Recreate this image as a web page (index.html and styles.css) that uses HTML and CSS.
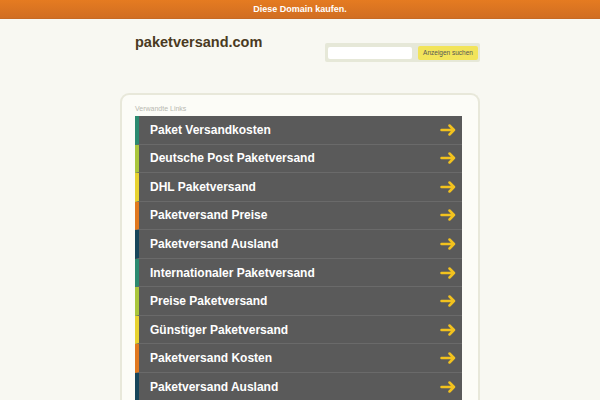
FILE: index.html
```html
<!DOCTYPE html>
<html>
<head>
<meta charset="utf-8">
<link rel="stylesheet" href="styles.css">
</head>
<body>
<div class="topbar">Diese Domain kaufen.</div>
<div class="wrap">
  <div class="header">
    <div class="logo">paketversand.com</div>
    <div class="search">
      <div class="input"></div>
      <div class="btn">Anzeigen suchen</div>
    </div>
  </div>
  <div class="panel">
    <div class="label">Verwandte Links</div>
    <div class="list">
      <div class="row c1"><span>Paket Versandkosten</span><svg class="arr" viewBox="0 0 16 12"><path d="M1.5 6H14M9.5 1.5L14 6L9.5 10.5"/></svg></div>
      <div class="row c2"><span>Deutsche Post Paketversand</span><svg class="arr" viewBox="0 0 16 12"><path d="M1.5 6H14M9.5 1.5L14 6L9.5 10.5"/></svg></div>
      <div class="row c3"><span>DHL Paketversand</span><svg class="arr" viewBox="0 0 16 12"><path d="M1.5 6H14M9.5 1.5L14 6L9.5 10.5"/></svg></div>
      <div class="row c4"><span>Paketversand Preise</span><svg class="arr" viewBox="0 0 16 12"><path d="M1.5 6H14M9.5 1.5L14 6L9.5 10.5"/></svg></div>
      <div class="row c5"><span>Paketversand Ausland</span><svg class="arr" viewBox="0 0 16 12"><path d="M1.5 6H14M9.5 1.5L14 6L9.5 10.5"/></svg></div>
      <div class="row c1"><span>Internationaler Paketversand</span><svg class="arr" viewBox="0 0 16 12"><path d="M1.5 6H14M9.5 1.5L14 6L9.5 10.5"/></svg></div>
      <div class="row c2"><span>Preise Paketversand</span><svg class="arr" viewBox="0 0 16 12"><path d="M1.5 6H14M9.5 1.5L14 6L9.5 10.5"/></svg></div>
      <div class="row c3"><span>Günstiger Paketversand</span><svg class="arr" viewBox="0 0 16 12"><path d="M1.5 6H14M9.5 1.5L14 6L9.5 10.5"/></svg></div>
      <div class="row c4"><span>Paketversand Kosten</span><svg class="arr" viewBox="0 0 16 12"><path d="M1.5 6H14M9.5 1.5L14 6L9.5 10.5"/></svg></div>
      <div class="row c5"><span>Paketversand Ausland</span><svg class="arr" viewBox="0 0 16 12"><path d="M1.5 6H14M9.5 1.5L14 6L9.5 10.5"/></svg></div>
    </div>
  </div>
</div>
</body>
</html>
```
FILE: styles.css
```css
html, body {
  margin: 0;
  padding: 0;
  background: #f8f8f2;
  font-family: "Liberation Sans", Arial, sans-serif;
  overflow: hidden;
}
.topbar {
  height: 18px;
  line-height: 18px;
  background: linear-gradient(#e57b21, #d16e22);
  border-bottom: 1px solid #c76a24;
  color: #fff;
  font-size: 9px;
  font-weight: bold;
  text-align: center;
}
.wrap {
  width: 360px;
  margin: 0 auto;
}
.header {
  display: flex;
  justify-content: space-between;
  align-items: flex-start;
  height: 74px;
  padding-left: 15px;
}
.logo {
  margin-top: 15px;
  font-size: 14.5px;
  font-weight: bold;
  color: #4a3a22;
}
.search {
  margin-top: 24px;
  width: 155px;
  height: 19px;
  background: #e6e8d8;
  border-radius: 2px;
  display: flex;
  align-items: center;
  padding: 0 2px 0 3px;
  box-sizing: border-box;
}
.input {
  width: 84px;
  height: 12px;
  background: #fff;
  border-radius: 2px;
}
.btn {
  margin-left: auto;
  width: 60px;
  height: 14px;
  line-height: 14px;
  background: #f2e45a;
  border-radius: 2px;
  font-size: 6.5px;
  color: #555;
  text-align: center;
}
.panel {
  background: #fcfcf7;
  border: 2px solid #e8e8da;
  border-bottom: none;
  border-radius: 9px 9px 0 0;
  padding: 10px 16px 0 13px;
  height: 320px;
  box-sizing: border-box;
}
.label {
  font-size: 7px;
  color: #b8b8b0;
  height: 11px;
  line-height: 8px;
}
.list {
  display: flex;
  flex-direction: column;
}
.row {
  height: 27.56px;
  flex: none;
  border-bottom: 1px solid #6a6a6a;
  background: #5a5a5a;
  border-left: 4px solid #2a8a70;
  display: flex;
  align-items: center;
  justify-content: space-between;
  padding: 0 6px 0 11px;
  color: #fff;
  font-size: 12px;
  font-weight: bold;
}
.row.c1 { border-left-color: #2b8a6f; }
.row.c2 { border-left-color: #a9c63c; }
.row.c3 { border-left-color: #e7d230; }
.row.c4 { border-left-color: #e0781e; }
.row.c5 { border-left-color: #17465a; }
.arr {
  width: 16px;
  height: 12px;
  fill: none;
  stroke: #f2c21e;
  stroke-width: 2.5;
  stroke-linecap: round;
  stroke-linejoin: round;
}
```
